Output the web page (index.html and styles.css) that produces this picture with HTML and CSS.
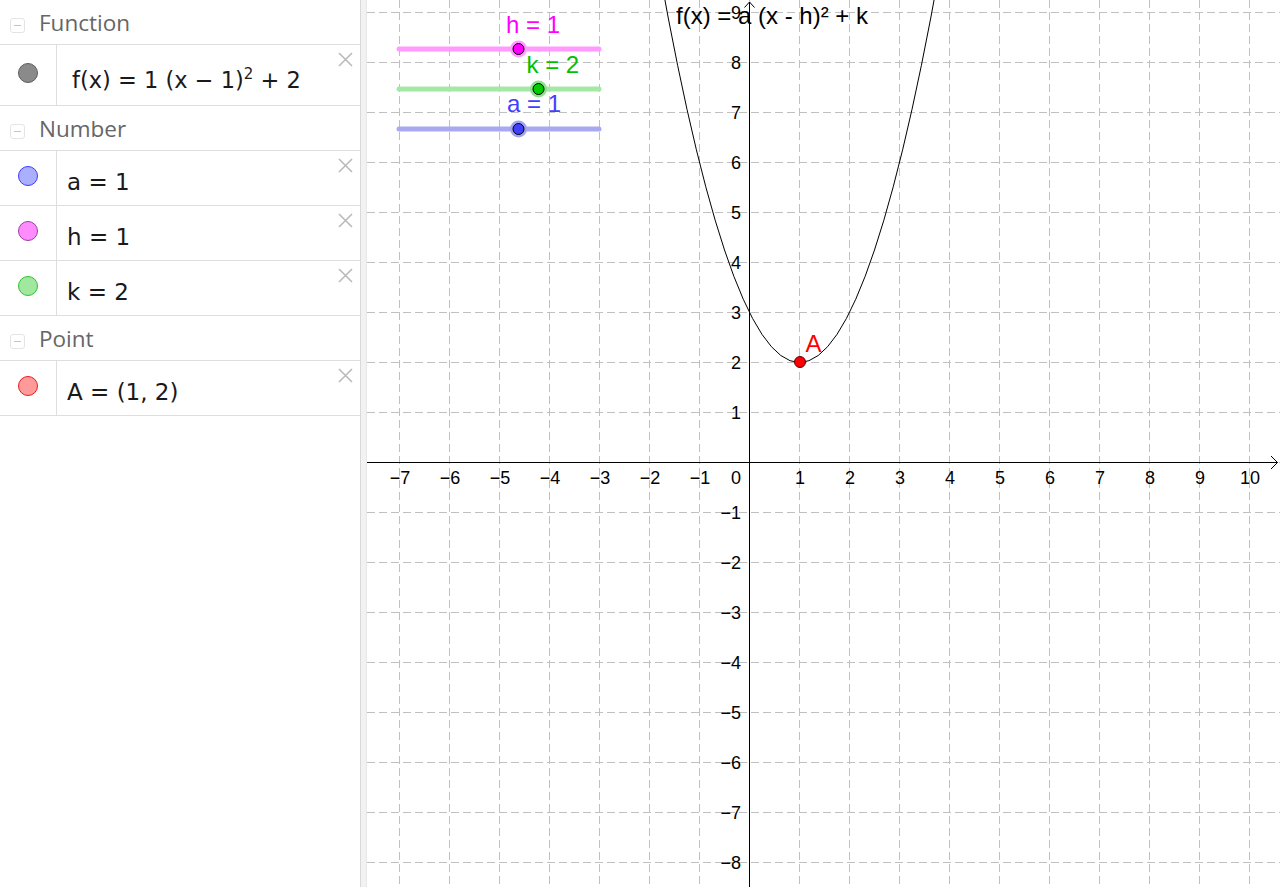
FILE: index.html
```html
<!DOCTYPE html>
<html lang="en">
<head>
<meta charset="utf-8">
<title>Vertex form of a parabola</title>
<link rel="stylesheet" href="styles.css">
</head>
<body>
<div class="app">
  <aside class="algebra">
    <div class="group-head"><span class="toggle"></span><span class="group-name">Function</span></div>
    <div class="item item-tall">
      <div class="marker"><span class="dot dot-f"></span></div>
      <div class="formula formula-f">f(x) = 1 (x − 1)<sup>2</sup> + 2</div>
      <button class="close" type="button"><svg viewBox="0 0 15 15" width="15" height="15"><path d="M1 1L14 14M14 1L1 14"/></svg></button>
    </div>

    <div class="group-head"><span class="toggle"></span><span class="group-name">Number</span></div>
    <div class="item">
      <div class="marker"><span class="dot dot-a"></span></div>
      <div class="formula">a = 1</div>
      <button class="close" type="button"><svg viewBox="0 0 15 15" width="15" height="15"><path d="M1 1L14 14M14 1L1 14"/></svg></button>
    </div>
    <div class="item">
      <div class="marker"><span class="dot dot-h"></span></div>
      <div class="formula">h = 1</div>
      <button class="close" type="button"><svg viewBox="0 0 15 15" width="15" height="15"><path d="M1 1L14 14M14 1L1 14"/></svg></button>
    </div>
    <div class="item">
      <div class="marker"><span class="dot dot-k"></span></div>
      <div class="formula">k = 2</div>
      <button class="close" type="button"><svg viewBox="0 0 15 15" width="15" height="15"><path d="M1 1L14 14M14 1L1 14"/></svg></button>
    </div>

    <div class="group-head"><span class="toggle"></span><span class="group-name">Point</span></div>
    <div class="item">
      <div class="marker"><span class="dot dot-p"></span></div>
      <div class="formula">A = (1, 2)</div>
      <button class="close" type="button"><svg viewBox="0 0 15 15" width="15" height="15"><path d="M1 1L14 14M14 1L1 14"/></svg></button>
    </div>
  </aside>

  <div class="splitter"></div>

  <main class="graphics">
    <svg class="canvas" viewBox="367 0 913 887" width="913" height="887">
      <path class="grid" d="M399.5 0V887M449.5 0V887M499.5 0V887M549.5 0V887M599.5 0V887M649.5 0V887M699.5 0V887M749.5 0V887M799.5 0V887M849.5 0V887M899.5 0V887M949.5 0V887M999.5 0V887M1049.5 0V887M1099.5 0V887M1149.5 0V887M1199.5 0V887M1249.5 0V887
        M367 12.5H1280M367 62.5H1280M367 112.5H1280M367 162.5H1280M367 212.5H1280M367 262.5H1280M367 312.5H1280M367 362.5H1280M367 412.5H1280M367 462.5H1280M367 512.5H1280M367 562.5H1280M367 612.5H1280M367 662.5H1280M367 712.5H1280M367 762.5H1280M367 812.5H1280M367 862.5H1280"/>

      <path class="axis" d="M367 462.5H1277.5M749.5 887V2"/>
      <path class="axis" d="M1271 456L1277.5 462.5L1271 469"/>
      <path class="axis" d="M744.5 7.5L749.5 2L754.5 7.5"/>

      <g class="xlabels">
        <text x="400" y="484">−7</text>
        <text x="450" y="484">−6</text>
        <text x="500" y="484">−5</text>
        <text x="550" y="484">−4</text>
        <text x="600" y="484">−3</text>
        <text x="650" y="484">−2</text>
        <text x="700" y="484">−1</text>
        <text x="800" y="484">1</text>
        <text x="850" y="484">2</text>
        <text x="900" y="484">3</text>
        <text x="950" y="484">4</text>
        <text x="1000" y="484">5</text>
        <text x="1050" y="484">6</text>
        <text x="1100" y="484">7</text>
        <text x="1150" y="484">8</text>
        <text x="1200" y="484">9</text>
        <text x="1250" y="484">10</text>
      </g>
      <g class="ylabels">
        <text x="741" y="484">0</text>
        <text x="741" y="19">9</text>
        <text x="741" y="69">8</text>
        <text x="741" y="119">7</text>
        <text x="741" y="169">6</text>
        <text x="741" y="219">5</text>
        <text x="741" y="269">4</text>
        <text x="741" y="319">3</text>
        <text x="741" y="369">2</text>
        <text x="741" y="419">1</text>
        <text x="741" y="519">−1</text>
        <text x="741" y="569">−2</text>
        <text x="741" y="619">−3</text>
        <text x="741" y="669">−4</text>
        <text x="741" y="719">−5</text>
        <text x="741" y="769">−6</text>
        <text x="741" y="819">−7</text>
        <text x="741" y="869">−8</text>
      </g>

      <path class="curve" d="M649.5 -87.5Q799.5 812.5 949.5 -87.5"/>

      <text class="caption" x="676" y="24">f(x) = a (x - h)² + k</text>

      <g class="slider slider-h">
        <line x1="399" y1="49" x2="599" y2="49"/>
        <circle class="halo" cx="518.5" cy="49" r="8.5"/>
        <circle class="knob" cx="518.5" cy="49" r="5.5"/>
        <text x="506" y="33">h = 1</text>
      </g>
      <g class="slider slider-k">
        <line x1="399" y1="89" x2="599" y2="89"/>
        <circle class="halo" cx="538.5" cy="89" r="8.5"/>
        <circle class="knob" cx="538.5" cy="89" r="5.5"/>
        <text x="526.5" y="73">k = 2</text>
      </g>
      <g class="slider slider-a">
        <line x1="399" y1="129" x2="599" y2="129"/>
        <circle class="halo" cx="518.5" cy="129" r="8.5"/>
        <circle class="knob" cx="518.5" cy="129" r="5.5"/>
        <text x="507" y="112">a = 1</text>
      </g>

      <circle class="vertex" cx="800" cy="362" r="5.5"/>
      <text class="vertex-label" x="805.5" y="352">A</text>
    </svg>
  </main>
</div>
</body>
</html>
```

FILE: styles.css
```css
* {
  box-sizing: border-box;
}

html, body {
  margin: 0;
  padding: 0;
  background: #ffffff;
}

.app {
  display: flex;
  width: 1280px;
  height: 887px;
  overflow: hidden;
}

/* ---------- algebra view ---------- */
.algebra {
  width: 360px;
  flex: none;
  background: #ffffff;
  display: flex;
  flex-direction: column;
}

.group-head {
  display: flex;
  align-items: flex-start;
  height: 45px;
  padding: 2px 0 0 10px;
  border-bottom: 1px solid #dedede;
}

.toggle {
  width: 15px;
  height: 15px;
  margin-top: 16px;
  border: 1px solid #e4e4e4;
  border-radius: 3px;
  display: flex;
  align-items: center;
  justify-content: center;
}

.toggle::before {
  content: "";
  width: 7px;
  height: 1px;
  background: #c4c4c4;
}

.group-name {
  margin-left: 14px;
  font-family: "Open Sans", "Noto Sans", sans-serif;
  font-size: 22.5px;
  line-height: 42px;
  color: #666666;
}

.item {
  display: flex;
  align-items: stretch;
  height: 55px;
  border-bottom: 1px solid #dedede;
}

.item-tall {
  height: 61px;
}

.marker {
  width: 57px;
  flex: none;
  border-right: 1px solid #dedede;
  padding: 15px 0 0 18px;
}

.item-tall .marker {
  padding-top: 18px;
}

.dot {
  display: block;
  width: 20px;
  height: 20px;
  border-radius: 50%;
  border: 1px solid;
}

.dot-f { background: #8a8a8a; border-color: #5e5e5e; }
.dot-a { background: #aab0ff; border-color: #3b3bff; }
.dot-h { background: #ff8cff; border-color: #a03ca0; }
.dot-k { background: #a0e8a0; border-color: #2ec42e; }
.dot-p { background: #ff9a9a; border-color: #e81c1c; }

.formula {
  flex: 1;
  padding: 16px 0 0 10px;
  font-family: "DejaVu Sans", "Noto Sans", sans-serif;
  font-size: 23px;
  line-height: 30px;
  color: #1a1a1a;
  white-space: pre;
}

.formula-f {
  padding-top: 20px;
  padding-left: 15px;
  font-size: 22.5px;
}

.formula sup {
  font-size: 15px;
  line-height: 0;
  vertical-align: 9px;
}

.close {
  flex: none;
  align-self: flex-start;
  width: 15px;
  height: 15px;
  margin: 7px 7px 0 0;
  padding: 0;
  border: 0;
  background: none;
}

.close svg {
  display: block;
  fill: none;
  stroke: #b8b8b8;
  stroke-width: 1.5;
}

/* ---------- splitter ---------- */
.splitter {
  width: 7px;
  flex: none;
  background: #f2f2f2;
  border-left: 1px solid #d9d9d9;
  border-right: 1px solid #e8e8e8;
}

/* ---------- graphics view ---------- */
.graphics {
  flex: 1;
  background: #ffffff;
  overflow: hidden;
}

.canvas {
  display: block;
}

.grid {
  fill: none;
  stroke: #c0c0c0;
  stroke-width: 1;
  stroke-dasharray: 8 4;
  shape-rendering: crispEdges;
}

.axis {
  fill: none;
  stroke: #000000;
  stroke-width: 1;
}

.xlabels text,
.ylabels text {
  font-family: "Liberation Sans", Arial, sans-serif;
  font-size: 18px;
  fill: #000000;
}

.xlabels text {
  text-anchor: middle;
}

.ylabels text {
  text-anchor: end;
}

.curve {
  fill: none;
  stroke: #000000;
  stroke-width: 1;
}

.caption {
  font-family: "Liberation Sans", Arial, sans-serif;
  font-size: 24px;
  fill: #000000;
}

.slider line {
  stroke-width: 5;
  stroke-linecap: round;
}

.slider .knob {
  stroke: #000000;
  stroke-width: 1;
}

.slider .halo {
  stroke: none;
}

.slider text {
  font-family: "Liberation Sans", Arial, sans-serif;
  font-size: 24px;
}

.slider-h line { stroke: #ff9aff; }
.slider-h .halo { fill: #ff9aff; }
.slider-h .knob { fill: #ff00ff; }
.slider-h text { fill: #ff00ff; }

.slider-k line { stroke: #a3e8a3; }
.slider-k .halo { fill: #8fe08f; }
.slider-k .knob { fill: #00cc00; }
.slider-k text { fill: #00c000; }

.slider-a line { stroke: #a9a9f2; }
.slider-a .halo { fill: #a2a2ee; }
.slider-a .knob { fill: #4040ff; }
.slider-a text { fill: #4040ff; }

.vertex {
  fill: #ff0000;
  stroke: #5a0000;
  stroke-width: 1;
}

.vertex-label {
  font-family: "Liberation Sans", Arial, sans-serif;
  font-size: 24px;
  fill: #ff0000;
}
```
